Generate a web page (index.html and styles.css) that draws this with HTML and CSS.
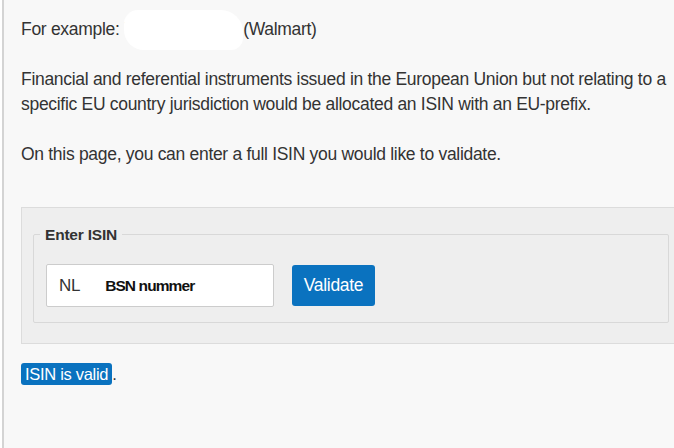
FILE: index.html
```html
<!DOCTYPE html>
<html lang="en">
<head>
  <meta charset="UTF-8" />
  <title>ISIN Validator</title>
  <link rel="stylesheet" href="styles.css">
</head>
<body>
  <div class="page">
    <p class="example">For example: '<span class="blot blot-top"></span>(Walmart)</p>
    <p>Financial and referential instruments issued in the European Union but not relating to a specific EU country jurisdiction would be allocated an ISIN with an EU-prefix.</p>
    <p>On this page, you can enter a full ISIN you would like to validate.</p>

    <div class="formBox">
      <fieldset>
        <legend>Enter ISIN</legend>
        <div class="row">
          <div class="isinInput">
            <span class="prefix">NL</span>
            <span class="blot blot-input">BSN nummer</span>
          </div>
          <button class="validateBtn">Validate</button>
        </div>
      </fieldset>
    </div>

    <p class="result"><span class="badge">ISIN is valid</span>.</p>
  </div>
</body>
</html>
```

FILE: styles.css
```css
* {
  margin: 0;
  padding: 0;
  box-sizing: border-box;
}

body {
  background: #fff;
  font-family: "Liberation Sans", Arial, sans-serif;
  color: #333;
  overflow: hidden;
}

.page {
  margin-left: 2px;
  border-left: 2px solid #d4d4d4;
  background: #f8f8f8;
  min-height: 100vh;
  padding: 17px 0 0 17px;
  font-size: 17.5px;
  line-height: 25px;
  letter-spacing: -0.3px;
}

.page p {
  margin-bottom: 25px;
}

.blot {
  background: #fff;
  display: inline-block;
}

.blot-top {
  width: 119px;
  height: 40px;
  vertical-align: middle;
  margin: -8px 0 -8px -3px;
  border-radius: 14px 22px 12px 20px;
}

.formBox {
  background: #eee;
  border: 1px solid #dcdcdc;
  border-right: none;
  margin-top: 40px;
  padding: 14px 5px 20px 11px;
}

fieldset {
  border: 1px solid #d8d8d8;
  border-radius: 2px;
  padding: 17px 12px 15px;
}

legend {
  font-weight: bold;
  font-size: 15.5px;
  color: #333;
  padding: 0 5px;
  margin-left: -6px;
  letter-spacing: -0.2px;
}

.row {
  display: flex;
  align-items: center;
  gap: 18px;
}

.isinInput {
  width: 228px;
  height: 43px;
  background: #fff;
  border: 1px solid #ccc;
  border-radius: 2px;
  display: flex;
  align-items: center;
  padding-left: 12px;
}

.prefix {
  color: #333;
  font-size: 17px;
}

.blot-input {
  color: #111;
  font-weight: bold;
  font-size: 15.5px;
  padding: 3px 40px 3px 10px;
  margin-left: 15px;
  border-radius: 16px;
  letter-spacing: -0.9px;
}

.validateBtn {
  font-family: inherit;
  font-size: 17.5px;
  letter-spacing: -0.3px;
  background: #0a72bf;
  color: #fff;
  border: none;
  border-radius: 3px;
  width: 83px;
  height: 41px;
}

.result {
  margin-top: 18px;
  font-size: 16.5px;
}

.badge {
  background: #0a72bf;
  color: #fff;
  border-radius: 3px;
  padding: 2px 4px 2px 4px;
}
```
